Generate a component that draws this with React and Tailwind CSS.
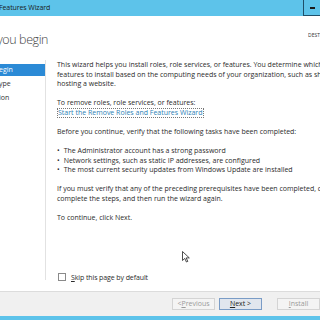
import React from "react";

const font = { fontFamily: '"Open Sans", "Noto Sans", sans-serif' };

function NavItem({ label, active }) {
    return (
        <div
            className={
                active
                    ? "h-[12px] flex items-center bg-[#2b8ad6] text-white"
                    : "h-[12px] flex items-center text-[#333]"
            }
        >
            <span className="-ml-[1px] whitespace-nowrap">{label}</span>
        </div>
    );
}

function Button({ children, primary }) {
    return (
        <div
            className={
                primary
                    ? "h-[12px] w-[43px] flex items-center justify-center border border-[#7a9cc6] bg-[#e1e6ee] text-[#222]"
                    : "h-[12px] w-[43px] flex items-center justify-center border border-[#d4d4d4] bg-[#f4f4f4] text-[#9a9a9a]"
            }
        >
            {children}
        </div>
    );
}

export default function App() {
    return (
        <div className="relative w-[320px] h-[320px] overflow-hidden bg-white flex flex-col" style={font}>
            {/* title bar */}
            <div className="h-[16px] shrink-0 bg-[#5dc3ea] flex items-center justify-between">
                <span className="-ml-[1px] text-[7px] tracking-[-0.1px] text-[#1a1a1a] whitespace-nowrap">Features Wizard</span>
                <div className="w-[17px] h-full border-l border-b border-[#1f4f69] flex items-center justify-center">
                    <div className="w-[5px] h-[2px] bg-[#1a1a1a]" />
                </div>
            </div>

            {/* header */}
            <div className="h-[44px] shrink-0 flex justify-between">
                <div className="pt-[16px] -ml-[3px] text-[12.5px] tracking-[-0.4px] leading-[16px] font-light text-[#444] whitespace-nowrap">
                    you begin
                </div>
                <div className="pt-[16px] text-[5px] text-[#333] whitespace-nowrap w-[12px] overflow-hidden">
                    DEST
                </div>
            </div>

            {/* body */}
            <div className="flex-1 flex text-[7px] leading-[9.5px]">
                <div className="w-[46px] shrink-0 pt-[4px] flex flex-col gap-[2px] border-r border-[#e2e2e2] mb-[11px]">
                    <NavItem label="egin" active />
                    <NavItem label="ype" />
                    <NavItem label="ion" />
                </div>
                <div className="flex-1 pl-[11px] flex flex-col text-[#2b2b2b] whitespace-nowrap mb-[9px]">
                    <div className="flex flex-col">
                        <span>This wizard helps you install roles, role services, or features. You determine which roles, role services, or</span>
                        <span>features to install based on the computing needs of your organization, such as sharing documents, or</span>
                        <span>hosting a website.</span>
                    </div>
                    <div className="flex flex-col mt-[9.5px] items-start">
                        <span>To remove roles, role services, or features:</span>
                        <span className="text-[#2d7fb6] border border-dotted border-[#777] leading-[7.5px] pb-[0.5px]">Start the Remove Roles and Features Wizard</span>
                    </div>
                    <div className="mt-[9.5px]">Before you continue, verify that the following tasks have been completed:</div>
                    <ul className="mt-[9.5px] flex flex-col">
                        <li className="flex gap-[4px]"><span>•</span><span>The Administrator account has a strong password</span></li>
                        <li className="flex gap-[4px]"><span>•</span><span>Network settings, such as static IP addresses, are configured</span></li>
                        <li className="flex gap-[4px]"><span>•</span><span>The most current security updates from Windows Update are installed</span></li>
                    </ul>
                    <div className="mt-[9.5px] flex flex-col">
                        <span>If you must verify that any of the preceding prerequisites have been completed, close the wizard,</span>
                        <span>complete the steps, and then run the wizard again.</span>
                    </div>
                    <div className="mt-[9.5px]">To continue, click Next.</div>
                    <div className="mt-auto flex items-center gap-[5px] pl-[1px] tracking-[-0.1px]">
                        <div className="w-[8px] h-[8px] border border-[#8a8a8a] bg-white" />
                        <span><u>S</u>kip this page by default</span>
                    </div>
                </div>
            </div>

            {/* footer */}
            <div className="h-[25px] shrink-0 bg-[#f0f0f0] border-t border-[#dcdcdc] flex items-center pl-[172px] gap-[4px] text-[7px]">
                <Button>&lt; <u>P</u>revious</Button>
                <Button primary><u>N</u>ext &gt;</Button>
                <div className="ml-[11px]">
                    <Button><u>I</u>nstall</Button>
                </div>
            </div>
            <div className="h-[4px] shrink-0 bg-[#5dc3ea]" />

            {/* mouse pointer */}
            <svg className="absolute left-[182px] top-[251px]" width="8" height="12" viewBox="0 0 8 12">
                <path d="M0.5 0.5 L0.5 9.5 L2.8 7.4 L4.4 11 L5.8 10.4 L4.2 6.9 L7.3 6.9 Z" fill="white" stroke="#222" strokeWidth="0.8" strokeLinejoin="round" />
            </svg>
        </div>
    );
}
